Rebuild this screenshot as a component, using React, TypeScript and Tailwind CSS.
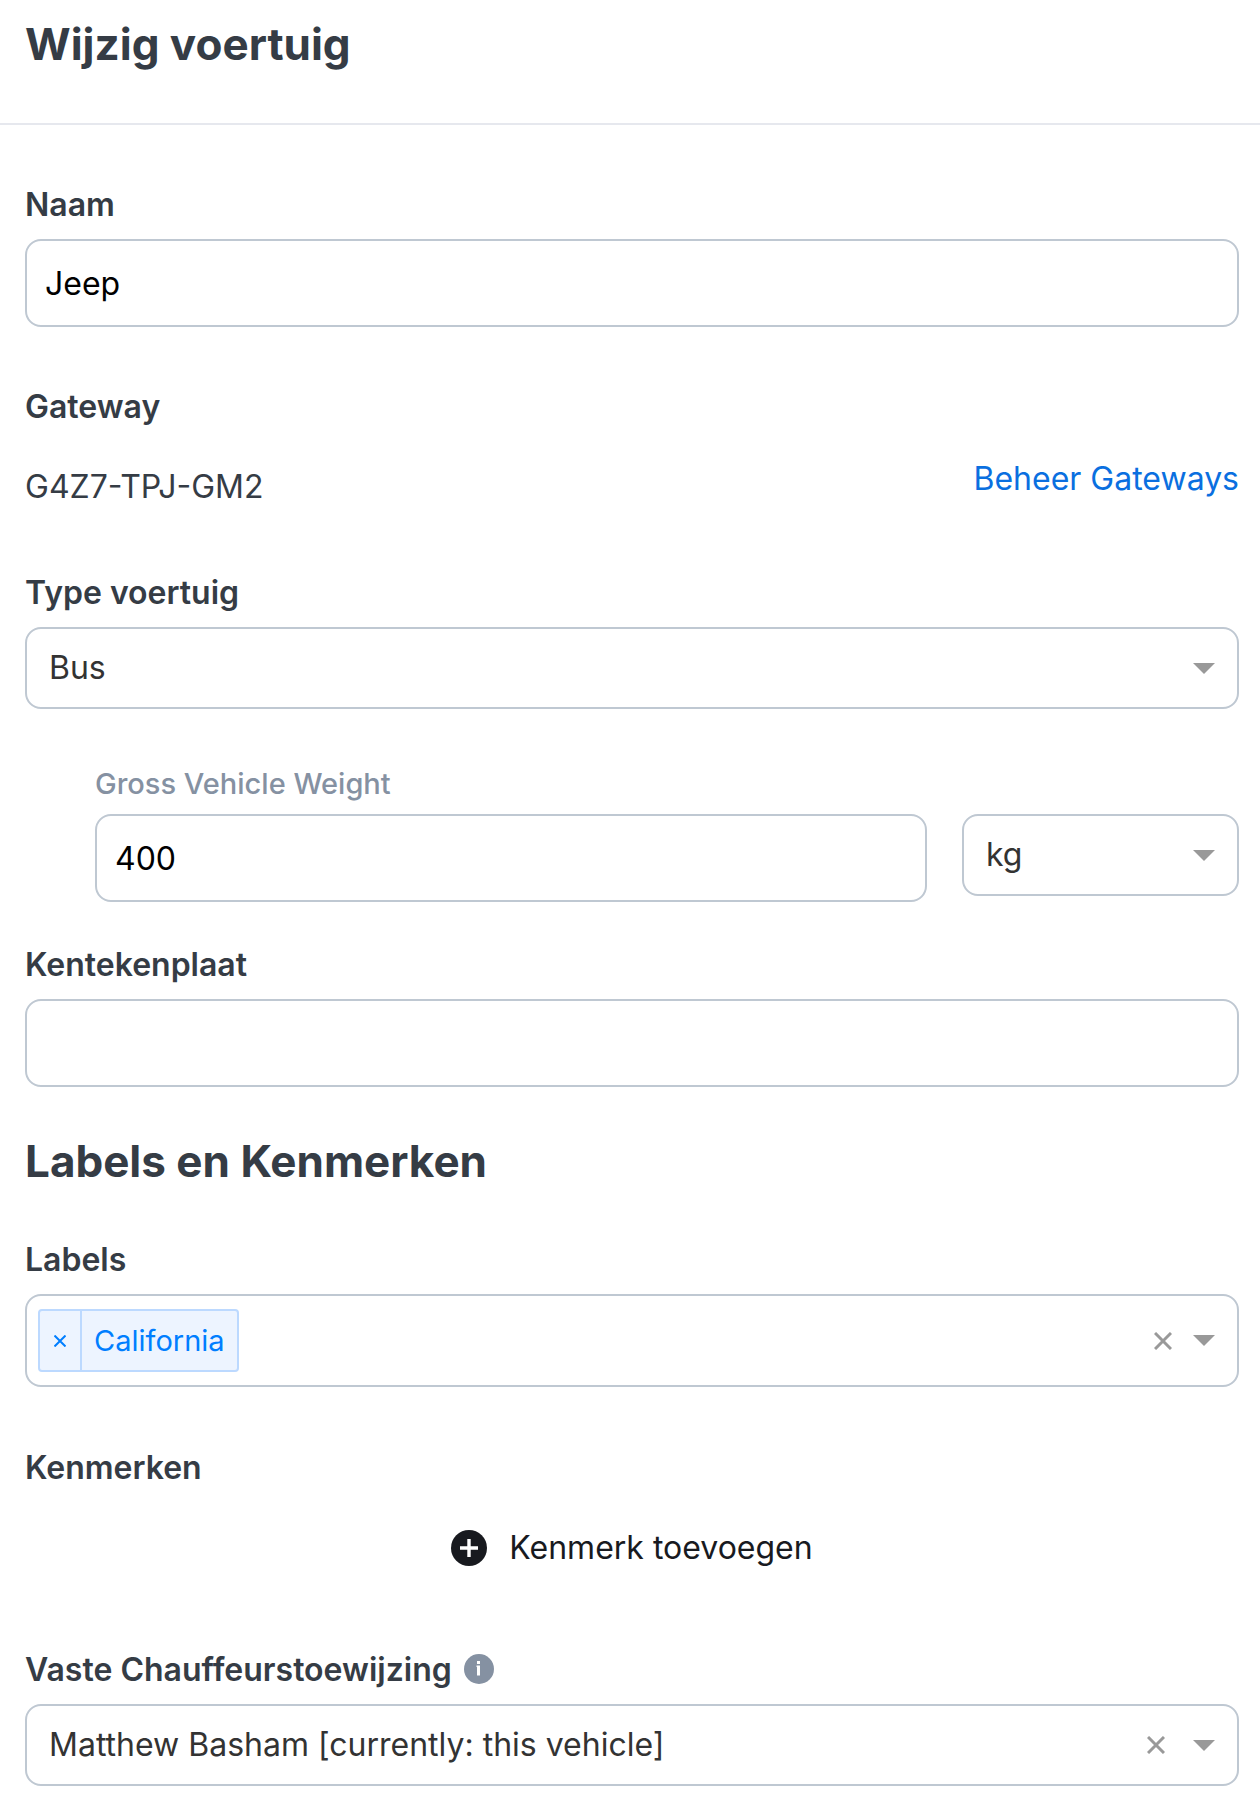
import { useState } from "react";
import type { ReactNode } from "react";

const inputStyles =
  "block h-[88px] w-full rounded-2xl border-2 border-[#bfc8d2] bg-white px-[18px] text-[32px] text-black outline-none focus:border-[#0a6fe0]";

const selectStyles =
  "block h-[82px] w-full appearance-none rounded-2xl border-2 border-[#bfc8d2] bg-white pl-[22px] text-[32px] text-[#333333] outline-none focus:border-[#0a6fe0]";

function Caret() {
  return (
    <svg className="h-[11px] w-[22px]" viewBox="0 0 22 11" fill="#999999" aria-hidden="true">
      <path d="M0 0h22L11 11z" />
    </svg>
  );
}

function Cross() {
  return (
    <svg className="size-[18px]" viewBox="0 0 18 18" stroke="#999999" strokeWidth="3" aria-hidden="true">
      <path d="M1 1l16 16M17 1L1 17" />
    </svg>
  );
}

function FieldLabel({ htmlFor, children }: { htmlFor: string; children: ReactNode }) {
  return (
    <label htmlFor={htmlFor} className="mb-4 block text-[32px] leading-[37px] font-semibold">
      {children}
    </label>
  );
}

export default function App() {
  const [tags, setTags] = useState(["California"]);
  const [driver, setDriver] = useState("matthew");

  return (
    <div className="bg-white font-[Inter,sans-serif] text-[#353c45]">
      <header className="border-b-2 border-[#e6e8ee] pt-5 pb-[55px] pl-[25px]">
        <h1 className="text-[44px] leading-[48px] font-bold">Wijzig voertuig</h1>
      </header>

      <form className="pt-[61px] pr-[21px] pb-5 pl-[25px]" onSubmit={(e) => e.preventDefault()}>
        <FieldLabel htmlFor="name">Naam</FieldLabel>
        <input id="name" type="text" defaultValue="Jeep" className={inputStyles} />

        {/* Gateway */}
        <h3 className="mt-[61px] text-[32px] leading-[37px] font-semibold">Gateway</h3>
        <div className="mt-[35px] flex items-start justify-between text-[32px] leading-[37px]">
          <p className="pt-2">G4Z7-TPJ-GM2</p>
          <a href="#gateways" className="text-[#0a6fe0]">
            Beheer Gateways
          </a>
        </div>

        {/* Vehicle type and weight */}
        <div className="mt-[69px]">
          <FieldLabel htmlFor="type">Type voertuig</FieldLabel>
          <div className="relative">
            <select id="type" defaultValue="bus" className={selectStyles}>
              <option value="bus">Bus</option>
            </select>
            <span className="pointer-events-none absolute inset-y-0 right-6 flex items-center">
              <Caret />
            </span>
          </div>
        </div>

        <div className="mt-[57px] ml-[70px]">
          <label htmlFor="weight" className="mb-3 block text-[29px] leading-9 font-medium text-[#8591a2]">
            Gross Vehicle Weight
          </label>
          <div className="flex items-start gap-[35px]">
            <input id="weight" type="text" defaultValue="400" className={inputStyles} />
            <div className="relative w-[277px] shrink-0">
              <select aria-label="Eenheid" defaultValue="kg" className={selectStyles}>
                <option value="kg">kg</option>
              </select>
              <span className="pointer-events-none absolute inset-y-0 right-6 flex items-center">
                <Caret />
              </span>
            </div>
          </div>
        </div>

        <div className="mt-11">
          <FieldLabel htmlFor="plate">Kentekenplaat</FieldLabel>
          <input id="plate" type="text" className={inputStyles} />
        </div>

        {/* Labels and attributes */}
        <h2 className="mt-[50px] text-[44px] leading-[48px] font-bold">Labels en Kenmerken</h2>

        <div className="mt-14">
          <FieldLabel htmlFor="labels">Labels</FieldLabel>
          <div className="flex h-[93px] items-center rounded-2xl border-2 border-[#bfc8d2] pr-[22px] pl-[11px]">
            {tags.map((tag) => (
              <span
                key={tag}
                className="flex h-[63px] items-stretch rounded-sm border-2 border-[#bcd9ff] bg-[#edf4ff] text-[29px] text-[#007eff]"
              >
                <button
                  type="button"
                  aria-label={`Verwijder ${tag}`}
                  className="flex w-[42px] items-center justify-center border-r-2 border-[#bcd9ff]"
                  onClick={() => setTags(tags.filter((t) => t !== tag))}
                >
                  <svg className="size-3" viewBox="0 0 12 12" stroke="currentColor" strokeWidth="2" aria-hidden="true">
                    <path d="M0.5 0.5l11 11M11.5 0.5l-11 11" />
                  </svg>
                </button>
                <span className="flex items-center px-3">{tag}</span>
              </span>
            ))}
            <input id="labels" type="text" className="h-full min-w-0 flex-1 px-2 text-[29px] outline-none" />
            <button type="button" aria-label="Labels wissen" onClick={() => setTags([])}>
              <Cross />
            </button>
            <button type="button" aria-label="Labels tonen" className="ml-[21px]">
              <Caret />
            </button>
          </div>
        </div>

        <h3 className="mt-[62px] text-[32px] leading-[37px] font-semibold">Kenmerken</h3>
        <button
          type="button"
          className="mx-auto mt-[43px] flex items-center gap-[22px] text-[32px] leading-[37px] text-[#181a1f]"
        >
          <svg className="size-9" viewBox="0 0 36 36" aria-hidden="true">
            <circle cx="18" cy="18" r="18" fill="#181a1f" />
            <path d="M18 9v18M9 18h18" stroke="#ffffff" strokeWidth="3.4" />
          </svg>
          Kenmerk toevoegen
        </button>

        {/* Driver assignment */}
        <div className="mt-[85px]">
          <div className="flex items-start gap-3">
            <FieldLabel htmlFor="driver">Vaste Chauffeurstoewijzing</FieldLabel>
            <svg className="mt-[3px] size-[30px]" viewBox="0 0 30 30" aria-hidden="true">
              <circle cx="15" cy="15" r="15" fill="#8591a2" />
              <path d="M13 7h3v3h-3zM12.5 11.5H16v10h-3v-8.5h-.5z" fill="#ffffff" />
            </svg>
          </div>
          <div className="relative">
            <select
              id="driver"
              value={driver}
              onChange={(e) => setDriver(e.target.value)}
              className={selectStyles}
            >
              <option value=""></option>
              <option value="matthew">Matthew Basham [currently: this vehicle]</option>
            </select>
            <button
              type="button"
              aria-label="Chauffeur wissen"
              className="absolute inset-y-0 right-[74px] flex items-center"
              onClick={() => setDriver("")}
            >
              <Cross />
            </button>
            <span className="pointer-events-none absolute inset-y-0 right-6 flex items-center">
              <Caret />
            </span>
          </div>
        </div>
      </form>
    </div>
  );
}
